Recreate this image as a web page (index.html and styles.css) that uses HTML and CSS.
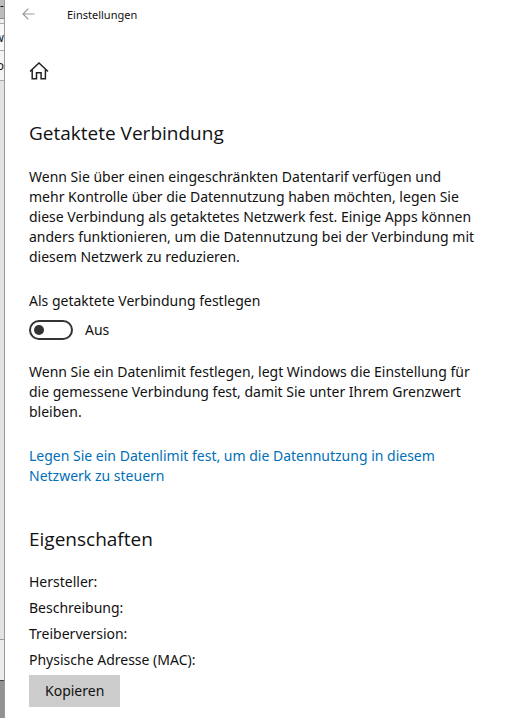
FILE: index.html
```html
<!DOCTYPE html>
<html lang="de">
<head>
    <meta charset="UTF-8">
    <meta name="viewport" content="width=device-width, initial-scale=1.0">
    <title>Einstellungen</title>
    <link rel="stylesheet" href="styles.css">
</head>
<body>
    <!-- Fenster im Hintergrund -->
    <div class="behind">
        <div class="behind-title">-</div>
        <div class="behind-gap"></div>
        <div class="behind-tab"><span>w</span></div>
        <div class="behind-row">o</div>
        <div class="behind-body"></div>
        <div class="behind-status"></div>
        <div class="behind-desktop"></div>
    </div>

    <div class="window">
        <header class="titlebar">
            <button class="back" type="button" aria-label="Zurück">
                <svg width="14" height="12" viewBox="0 0 14 12" fill="none" stroke="#999" stroke-width="1.2">
                    <path d="M6.3 .7 1 6l5.3 5.3M1 6h11.5"/>
                </svg>
            </button>
            <span class="title">Einstellungen</span>
        </header>

        <main class="content">
            <button class="home" type="button" aria-label="Startseite">
                <svg width="20" height="18" viewBox="0 0 20 18" fill="none" stroke="#222" stroke-width="1.5">
                    <path d="M1 9.5 10 1l9 8.5M3.2 7.8v9h4.3v-6h4.6v6h4.3v-9"/>
                </svg>
            </button>

            <h1>Getaktete Verbindung</h1>
            <p>Wenn Sie über einen eingeschränkten Datentarif verfügen und mehr Kontrolle über die Datennutzung haben möchten, legen Sie diese Verbindung als getaktetes Netzwerk fest. Einige Apps können anders funktionieren, um die Datennutzung bei der Verbindung mit diesem Netzwerk zu reduzieren.</p>

            <label class="setting" for="metered">Als getaktete Verbindung festlegen</label>
            <div class="toggle-row">
                <input class="toggle" type="checkbox" role="switch" id="metered">
                <span>Aus</span>
            </div>

            <p>Wenn Sie ein Datenlimit festlegen, legt Windows die Einstellung für die gemessene Verbindung fest, damit Sie unter Ihrem Grenzwert bleiben.</p>
            <p><a href="#">Legen Sie ein Datenlimit fest, um die Datennutzung in diesem Netzwerk zu steuern</a></p>

            <h2>Eigenschaften</h2>
            <ul class="properties">
                <li>Hersteller:</li>
                <li>Beschreibung:</li>
                <li>Treiberversion:</li>
                <li>Physische Adresse (MAC):</li>
            </ul>
            <button class="copy" type="button">Kopieren</button>
        </main>
    </div>
</body>
</html>
```

FILE: styles.css
```css
* {
    box-sizing: border-box;
}
body {
    display: flex;
    min-height: 100vh;
    margin: 0;
    background: white;
    color: #111;
    font-family: "Noto Sans", "Open Sans", sans-serif;
    font-size: 14px;
    line-height: 20px;
}
button {
    padding: 0;
    border: none;
    background: none;
    color: inherit;
    font: inherit;
}

/* Fenster im Hintergrund */
.behind {
    display: flex;
    flex-direction: column;
    flex: none;
    width: 5px;
    overflow: hidden;
    border-right: 1px solid #999;
    background: #e3e3e3;
    font-size: 12px;
}
.behind-title {
    height: 19px;
    border-bottom: 1px solid #888;
    background: #bcbcbc;
    line-height: 12px;
}
.behind-gap {
    height: 5px;
    border-bottom: 1px solid #aaa;
    background: #eee;
}
.behind-tab {
    display: flex;
    justify-content: flex-end;
    height: 27px;
    border-bottom: 1px solid #aaa;
    background: #f8f8f8;
    line-height: 28px;
}
.behind-row {
    display: flex;
    justify-content: flex-end;
    height: 30px;
    border-bottom: 1px solid #aaa;
    background: #f4f4f4;
    line-height: 30px;
}
.behind-body {
    flex: 1;
    border-bottom: 1px solid #999;
}
.behind-status {
    height: 41px;
    border-bottom: 1px solid #444;
    background: #ececec;
}
.behind-desktop {
    height: 37px;
    background: #929292;
}

/* Einstellungen */
.window {
    flex: 1;
    min-width: 0;
}
.titlebar {
    display: flex;
    align-items: center;
    height: 28px;
    padding-left: 17px;
}
.back,
.home {
    display: flex;
}
.title {
    margin-left: 31px;
    padding-top: 2px;
    font-size: 11px;
}
.content {
    padding: 34px 30px 11px 24px;
}
h1,
h2 {
    margin: 0;
    font-family: "Open Sans", "Noto Sans", sans-serif;
    font-size: 19px;
    font-weight: 400;
    line-height: 26px;
}
h1 {
    margin-top: 40px;
    margin-bottom: 21px;
}
h2 {
    margin-top: 40px;
    margin-bottom: 17px;
}
p {
    margin: 0 0 24px;
}
.setting {
    display: block;
}
.toggle-row {
    display: flex;
    align-items: center;
    gap: 12px;
    margin: 9px 0 22px;
}
.toggle {
    display: flex;
    align-items: center;
    appearance: none;
    width: 44px;
    height: 20px;
    margin: 0;
    padding-left: 3px;
    border: 2px solid #333;
    border-radius: 10px;
}
.toggle::before {
    content: "";
    width: 10px;
    height: 10px;
    border-radius: 50%;
    background: #333;
}
a {
    color: #006fb8;
    text-decoration: none;
}
.properties {
    margin: 0 0 2px;
    padding: 0;
    list-style: none;
    line-height: 26px;
}
.copy {
    height: 32px;
    padding: 0 16px;
    background: #ccc;
}
```
